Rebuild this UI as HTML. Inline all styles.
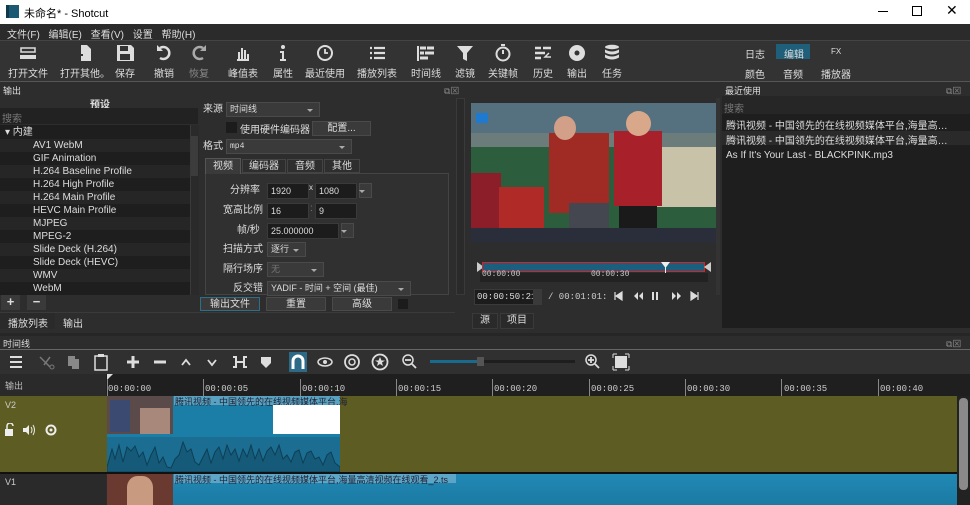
<!DOCTYPE html>
<html><head><meta charset="utf-8">
<style>
*{margin:0;padding:0;box-sizing:border-box}
body{width:970px;height:505px;overflow:hidden;background:#2d2d2d;font-family:"Liberation Sans","Noto Sans CJK SC",sans-serif;font-size:10px;color:#ddd;position:relative}
.a{position:absolute;white-space:nowrap}
.tb{position:absolute;top:44px;width:50px;text-align:center;font-size:10px;color:#ddd}
.tb svg{display:block;margin:0 auto 3px;height:18px}
.row{position:absolute;left:0;width:190px;height:13px;padding-left:33px;line-height:13px;font-size:10px;color:#ddd}
.inp{position:absolute;background:#1c1c1c;border:1px solid #3a3a3a;color:#ddd;font-size:9px;line-height:14px;padding-left:3px}
.cb{position:absolute;background:#3a3a3a;border:1px solid #4a4a4a;color:#ddd;font-size:9px;line-height:13px;padding-left:3px}
.cb:after{content:"";position:absolute;right:6px;top:6px;border:3px solid transparent;border-top:3px solid #aaa}
.lbl{position:absolute;font-size:10px;line-height:12px;color:#ddd;text-align:right}
.btn{position:absolute;background:#3a3a3a;border:1px solid #4a4a4a;text-align:center;font-size:10px;line-height:13px;color:#ddd}
.tick{position:absolute;top:379px;width:1px;height:17px;background:#888}
.rl{position:absolute;top:384px;font-family:"Liberation Mono",monospace;font-size:9px;color:#ccc}
.rec{position:absolute;left:726px;width:230px;overflow:hidden;text-overflow:ellipsis;white-space:nowrap}
</style></head><body>
<!-- title bar -->
<div class="a" style="left:0;top:0;width:970px;height:24px;background:#fff"></div>
<div class="a" style="left:6px;top:5px;width:13px;height:13px;background:#1c5a73;border-left:3px solid #12394a"></div>
<div class="a" style="left:24px;top:5px;color:#000;font-size:11px">未命名* - Shotcut</div>
<div class="a" style="left:878px;top:11px;width:10px;height:1px;background:#000"></div>
<div class="a" style="left:912px;top:6px;width:10px;height:10px;border:1px solid #000"></div>
<div class="a" style="left:946px;top:2px;color:#000;font-size:14px">✕</div>
<!-- menu -->
<div class="a" style="left:0;top:24px;width:970px;height:16px;background:#2b2b2b"></div>
<div class="a" style="left:7px;top:26px;font-size:10px;word-spacing:6px">文件(F) 编辑(E) 查看(V) 设置 帮助(H)</div>
<!-- toolbar -->
<div class="a" style="left:0;top:40px;width:970px;height:42px;background:#333;border-top:1px solid #444;border-bottom:1px solid #555"></div>
<div class="tb" style="left:3px"><svg viewBox="0 0 20 18" width="20"><rect x="3" y="4" width="14" height="4" fill="none" stroke="#ddd" stroke-width="1.5"/><rect x="2" y="11" width="16" height="4" fill="#ddd"/></svg>打开文件</div>
<div class="tb" style="left:60px"><svg viewBox="0 0 20 18" width="20"><path d="M6 1h6l4 4v12H6z" fill="#ddd"/><path d="M2 11h6M5 8v6" stroke="#333" stroke-width="2"/></svg>打开其他。</div>
<div class="tb" style="left:100px"><svg viewBox="0 0 20 18" width="20"><path d="M2 1h14l3 3v13H2z" fill="#ddd"/><rect x="5" y="2" width="8" height="5" fill="#333"/><rect x="5" y="10" width="10" height="6" fill="#333"/></svg>保存</div>
<div class="tb" style="left:139px"><svg viewBox="0 0 20 18" width="20"><path d="M6 4a6 6 0 1 1 0 10" fill="none" stroke="#ddd" stroke-width="2.5"/><path d="M3 1v6h6z" fill="#ddd"/></svg>撤销</div>
<div class="tb" style="left:174px;color:#888"><svg viewBox="0 0 20 18" width="20"><path d="M14 4a6 6 0 1 0 0 10" fill="none" stroke="#aaa" stroke-width="2.5"/><path d="M17 1v6h-6z" fill="#aaa"/></svg>恢复</div>
<div class="tb" style="left:218px"><svg viewBox="0 0 20 18" width="20"><path d="M4 16h12M6 8v7M9 4v11M12 6v9M15 10v5" stroke="#ddd" stroke-width="2"/></svg>峰值表</div>
<div class="tb" style="left:258px"><svg viewBox="0 0 20 18" width="20"><circle cx="10" cy="3" r="2" fill="#ddd"/><path d="M7 7h4v8h2v2H7v-2h2V9H7z" fill="#ddd"/></svg>属性</div>
<div class="tb" style="left:300px"><svg viewBox="0 0 20 18" width="20"><circle cx="10" cy="9" r="7" fill="none" stroke="#ddd" stroke-width="2"/><path d="M10 5v4h3" stroke="#ddd" stroke-width="1.8" fill="none"/></svg>最近使用</div>
<div class="tb" style="left:352px"><svg viewBox="0 0 20 18" width="20"><path d="M3 4h2M7 4h11M3 9h2M7 9h11M3 14h2M7 14h11" stroke="#ddd" stroke-width="2.2"/></svg>播放列表</div>
<div class="tb" style="left:401px"><svg viewBox="0 0 20 18" width="20"><path d="M2 2v15" stroke="#ddd" stroke-width="2"/><path d="M4 4h6M11 4h7M4 9h4M9 9h9M4 14h8" stroke="#ddd" stroke-width="3"/></svg>时间线</div>
<div class="tb" style="left:440px"><svg viewBox="0 0 20 18" width="20"><path d="M2 2h16l-6 7v8l-4-2V9z" fill="#ddd"/></svg>滤镜</div>
<div class="tb" style="left:478px"><svg viewBox="0 0 20 18" width="20"><circle cx="10" cy="10" r="6.5" fill="none" stroke="#ddd" stroke-width="2"/><path d="M8 1h4M10 6v4" stroke="#ddd" stroke-width="2"/></svg>关键帧</div>
<div class="tb" style="left:518px"><svg viewBox="0 0 20 18" width="20"><path d="M2 4h6M10 4h8M2 9h10M2 14h6" stroke="#ddd" stroke-width="2.5"/><path d="M16 9l-4 4h6" fill="none" stroke="#ddd" stroke-width="1.5"/></svg>历史</div>
<div class="tb" style="left:552px"><svg viewBox="0 0 20 18" width="20"><circle cx="10" cy="9" r="8" fill="#ddd"/><circle cx="10" cy="9" r="2.5" fill="#333"/></svg>输出</div>
<div class="tb" style="left:587px"><svg viewBox="0 0 20 18" width="20"><ellipse cx="10" cy="3" rx="7" ry="2.2" fill="#ddd"/><path d="M3 5.5q7 4 14 0v3q-7 4-14 0zM3 10.5q7 4 14 0v3q-7 4-14 0z" fill="#ddd"/></svg>任务</div>
<div class="a" style="left:745px;top:46px">日志</div>
<div class="a" style="left:776px;top:44px;width:34px;height:15px;background:#1f5f7a"></div>
<div class="a" style="left:784px;top:46px">编辑</div>
<div class="a" style="left:831px;top:47px;font-size:8px">FX</div>
<div class="a" style="left:745px;top:66px">颜色</div>
<div class="a" style="left:783px;top:66px">音频</div>
<div class="a" style="left:821px;top:66px">播放器</div>

<!-- Output panel -->
<div class="a" style="left:0;top:83px;width:720px;height:250px;background:#2d2d2d"></div>
<div class="a" style="left:3px;top:84px;font-size:9px">输出</div>
<div class="a" style="left:444px;top:84px;font-size:9px;color:#888">⧉⊠</div>
<div class="a" style="left:90px;top:96px;font-weight:bold;font-size:10px">预设</div>
<div class="a" style="left:0;top:108px;width:198px;height:16px;background:#222"></div>
<div class="a" style="left:2px;top:110px;color:#777;font-size:10px">搜索</div>
<div class="a" style="left:0;top:125px;width:190px;height:170px;background:#1e1e1e"></div>
<div class="row" style="top:126px;padding-left:5px">▾ 内建</div>
<div class="row" style="top:139px;background:#262626">AV1 WebM</div>
<div class="row" style="top:152px">GIF Animation</div>
<div class="row" style="top:165px;background:#262626">H.264 Baseline Profile</div>
<div class="row" style="top:178px">H.264 High Profile</div>
<div class="row" style="top:191px;background:#262626">H.264 Main Profile</div>
<div class="row" style="top:204px">HEVC Main Profile</div>
<div class="row" style="top:217px;background:#262626">MJPEG</div>
<div class="row" style="top:230px">MPEG-2</div>
<div class="row" style="top:243px;background:#262626">Slide Deck (H.264)</div>
<div class="row" style="top:256px">Slide Deck (HEVC)</div>
<div class="row" style="top:269px;background:#262626">WMV</div>
<div class="row" style="top:282px">WebM</div>
<div class="a" style="left:190px;top:125px;width:9px;height:170px;background:#2a2a2a;border-left:1px solid #3a3a3a"></div>
<div class="a" style="left:191px;top:136px;width:7px;height:40px;background:#3c3c3c"></div>
<div class="a" style="left:1px;top:295px;width:19px;height:15px;background:#3a3a3a;text-align:center;font-weight:bold;font-size:13px;line-height:14px">+</div>
<div class="a" style="left:27px;top:295px;width:19px;height:15px;background:#3a3a3a;text-align:center;font-weight:bold;font-size:13px;line-height:13px">−</div>
<div class="a" style="left:0;top:312px;width:455px;height:1px;background:#3a3a3a"></div>
<div class="a" style="left:0;top:313px;width:55px;height:16px;background:#2a2a2a"></div>
<div class="a" style="left:8px;top:315px">播放列表</div>
<div class="a" style="left:63px;top:315px">输出</div>

<!-- form -->
<div class="lbl" style="left:203px;top:104px">来源</div>
<div class="cb" style="left:226px;top:102px;width:94px;height:15px">时间线</div>
<div class="a" style="left:226px;top:122px;width:11px;height:11px;background:#1c1c1c"></div>
<div class="a" style="left:240px;top:121px">使用硬件编码器</div>
<div class="btn" style="left:312px;top:121px;width:59px;height:15px">配置...</div>
<div class="lbl" style="left:203px;top:141px">格式</div>
<div class="cb" style="left:226px;top:139px;width:126px;height:15px;font-family:'Liberation Mono',monospace;font-size:8px">mp4</div>
<div class="a" style="left:205px;top:173px;width:244px;height:122px;border:1px solid #444;background:#303030"></div>
<div class="a" style="left:205px;top:158px;width:36px;height:16px;background:#3a3a3a;border:1px solid #555;border-bottom:none;text-align:center;line-height:15px">视频</div>
<div class="a" style="left:242px;top:159px;width:44px;height:14px;background:#2e2e2e;border:1px solid #444;text-align:center;line-height:13px">编码器</div>
<div class="a" style="left:287px;top:159px;width:36px;height:14px;background:#2e2e2e;border:1px solid #444;text-align:center;line-height:13px">音频</div>
<div class="a" style="left:324px;top:159px;width:36px;height:14px;background:#2e2e2e;border:1px solid #444;text-align:center;line-height:13px">其他</div>
<div class="lbl" style="left:230px;top:185px">分辨率</div>
<div class="inp" style="left:267px;top:183px;width:42px;height:16px">1920</div>
<div class="a" style="left:309px;top:183px;font-size:8px">x</div>
<div class="inp" style="left:315px;top:183px;width:42px;height:16px">1080</div>
<div class="cb" style="left:359px;top:183px;width:13px;height:15px"></div>
<div class="lbl" style="left:223px;top:205px">宽高比例</div>
<div class="inp" style="left:267px;top:203px;width:42px;height:16px">16</div>
<div class="a" style="left:310px;top:203px;color:#777">:</div>
<div class="inp" style="left:315px;top:203px;width:42px;height:16px">9</div>
<div class="lbl" style="left:237px;top:225px">帧/秒</div>
<div class="inp" style="left:267px;top:223px;width:72px;height:16px">25.000000</div>
<div class="cb" style="left:341px;top:223px;width:13px;height:15px"></div>
<div class="lbl" style="left:223px;top:244px">扫描方式</div>
<div class="cb" style="left:267px;top:242px;width:39px;height:15px">逐行</div>
<div class="lbl" style="left:223px;top:264px">隔行场序</div>
<div class="cb" style="left:267px;top:262px;width:57px;height:15px;color:#777">无</div>
<div class="lbl" style="left:233px;top:283px">反交错</div>
<div class="cb" style="left:267px;top:281px;width:144px;height:15px;font-size:9px">YADIF - 时间 + 空间 (最佳)</div>
<div class="btn" style="left:200px;top:297px;width:60px;height:14px;border-color:#2d6e8a">输出文件</div>
<div class="btn" style="left:266px;top:297px;width:60px;height:14px">重置</div>
<div class="btn" style="left:332px;top:297px;width:60px;height:14px">高级</div>
<div class="a" style="left:398px;top:299px;width:10px;height:10px;background:#1c1c1c"></div>
<div class="a" style="left:456px;top:98px;width:9px;height:197px;background:#2a2a2a;border:1px solid #3a3a3a"></div>

<!-- preview -->
<div class="a" style="left:471px;top:103px;width:245px;height:139px;background:#55707e;overflow:hidden">
 <div class="a" style="left:0;top:30px;width:245px;height:30px;background:#6b7c7a"></div>
 <div class="a" style="left:0;top:44px;width:245px;height:95px;background:#2c5e3e"></div>
 <div class="a" style="left:160px;top:44px;width:85px;height:60px;background:#c8c2a8"></div>
 <div class="a" style="left:0;top:70px;width:30px;height:60px;background:#8c1e2a"></div>
 <div class="a" style="left:28px;top:84px;width:45px;height:55px;background:#b02a28"></div>
 <div class="a" style="left:78px;top:30px;width:60px;height:80px;background:#a02a24"></div>
 <div class="a" style="left:98px;top:100px;width:40px;height:39px;background:#444650"></div>
 <div class="a" style="left:143px;top:28px;width:48px;height:75px;background:#a8202a"></div>
 <div class="a" style="left:148px;top:103px;width:38px;height:36px;background:#1a1a1a"></div>
 <div class="a" style="left:155px;top:8px;width:25px;height:25px;border-radius:50%;background:#d9a88a"></div>
 <div class="a" style="left:83px;top:13px;width:22px;height:24px;border-radius:50%;background:#d2a088"></div>
 <div class="a" style="left:5px;top:10px;width:12px;height:10px;background:#1e7ad0"></div>
 <div class="a" style="left:0;top:125px;width:245px;height:14px;background:#2a2e3a"></div>
</div>
<div class="a" style="left:716px;top:98px;width:4px;height:197px;background:#333"></div>
<div class="a" style="left:477px;top:262px;width:7px;height:10px;background:#ccc;clip-path:polygon(0 0,100% 50%,0 100%)"></div>
<div class="a" style="left:482px;top:262px;width:223px;height:10px;background:#1a5f7e;border:1px solid #e02020"></div>
<div class="a" style="left:704px;top:262px;width:7px;height:10px;background:#ccc;clip-path:polygon(100% 0,0 50%,100% 100%)"></div>
<div class="a" style="left:661px;top:262px;width:9px;height:6px;background:#eee;clip-path:polygon(0 0,100% 0,50% 100%)"></div>
<div class="a" style="left:665px;top:266px;width:1px;height:15px;background:#eee"></div>
<div class="a" style="left:480px;top:273px;width:228px;height:9px;background:#222"></div>
<div class="a" style="left:482px;top:270px;font-family:'Liberation Mono',monospace;font-size:8px;color:#ccc">00:00:00</div>
<div class="a" style="left:591px;top:270px;font-family:'Liberation Mono',monospace;font-size:8px;color:#ccc">00:00:30</div>
<div class="inp" style="left:474px;top:289px;width:64px;height:16px;font-family:'Liberation Mono',monospace;font-size:9px;line-height:15px;padding-left:2px">00:00:50:21</div>
<div class="a" style="left:533px;top:289px;width:9px;height:16px;background:#3a3a3a"></div>
<div class="a" style="left:548px;top:292px;font-family:'Liberation Mono',monospace;font-size:9px;color:#ccc">/ 00:01:01:</div>
<svg class="a" style="left:612px;top:291px" width="90" height="10" viewBox="0 0 90 10">
 <path d="M3 1v8M10 1v8L4 5z" fill="#ddd" stroke="#ddd" stroke-width="1.2"/>
 <path d="M26 1v8l-4-4zM31 1v8l-4-4z" fill="#ddd"/>
 <path d="M40 1h2v8h-2zM44 1h2v8h-2z" fill="#ddd"/>
 <path d="M60 1v8l4-4zM65 1v8l4-4z" fill="#ddd"/>
 <path d="M79 1v8l6-4z M86 1v8" fill="#ddd" stroke="#ddd" stroke-width="1.2"/>
</svg>
<div class="a" style="left:472px;top:313px;width:26px;height:16px;background:#2a2a2a;border:1px solid #3a3a3a;text-align:center;line-height:14px">源</div>
<div class="a" style="left:500px;top:313px;width:34px;height:16px;background:#2a2a2a;border:1px solid #3a3a3a;text-align:center;line-height:14px">项目</div>

<!-- recent -->
<div class="a" style="left:722px;top:83px;width:248px;height:245px;background:#262626"></div>
<div class="a" style="left:722px;top:83px;width:248px;height:13px;background:#2d2d2d"></div>
<div class="a" style="left:725px;top:84px;font-size:9px">最近使用</div>
<div class="a" style="left:946px;top:84px;font-size:9px;color:#888">⧉⊠</div>
<div class="a" style="left:724px;top:100px;color:#777">搜索</div>
<div class="a" style="left:722px;top:114px;width:248px;height:214px;background:#1e1e1e"></div>
<div class="a" style="left:722px;top:131px;width:248px;height:14px;background:#2a2a2a"></div>
<div class="rec" style="top:117px">腾讯视频 - 中国领先的在线视频媒体平台,海量高清视频在线观看</div>
<div class="rec" style="top:132px">腾讯视频 - 中国领先的在线视频媒体平台,海量高清视频在线观看</div>
<div class="rec" style="top:150px">As If It's Your Last - BLACKPINK.mp3</div>

<!-- timeline -->
<div class="a" style="left:0;top:333px;width:970px;height:3px;background:#262626"></div>
<div class="a" style="left:3px;top:337px;font-size:9px">时间线</div>
<div class="a" style="left:946px;top:337px;font-size:9px;color:#888">⧉⊠</div>
<div class="a" style="left:0;top:349px;width:970px;height:1px;background:#666"></div>
<div class="a" style="left:0;top:350px;width:970px;height:24px;background:#303030"></div>
<svg class="a" style="left:0;top:350px" width="640" height="24" viewBox="0 0 640 24">
 <path d="M10 7h12M10 12h12M10 17h12" stroke="#ddd" stroke-width="2"/>
 <path d="M40 7l10 10M50 7l-6 8" stroke="#777" stroke-width="1.5" fill="none"/><circle cx="52" cy="17" r="2" fill="none" stroke="#777"/>
 <rect x="68" y="6" width="7" height="10" fill="#888"/><rect x="72" y="9" width="7" height="10" fill="#888"/>
 <rect x="95" y="6" width="12" height="14" fill="none" stroke="#ddd" stroke-width="1.5"/><rect x="98" y="4" width="6" height="3" fill="#ddd"/>
 <path d="M127 12h12M133 6v12" stroke="#ddd" stroke-width="3"/>
 <path d="M154 12h12" stroke="#ddd" stroke-width="3"/>
 <path d="M182 15l4-5 4 5" stroke="#ddd" stroke-width="1.8" fill="none"/>
 <path d="M208 10l4 5 4-5" stroke="#ddd" stroke-width="1.8" fill="none"/>
 <path d="M233 7h3v10h-3M247 7h-3v10h3M236 12h8" stroke="#ddd" stroke-width="2" fill="none"/>
 <path d="M261 7h10v6l-5 5-5-5z" fill="#ddd"/>
 <rect x="289" y="2" width="18" height="20" fill="#2d6a87"/>
 <path d="M293 19v-8a5 5 0 0 1 10 0v8" stroke="#fff" stroke-width="3" fill="none"/>
 <ellipse cx="325" cy="12" rx="7" ry="4" fill="none" stroke="#ddd" stroke-width="1.5"/><circle cx="325" cy="12" r="2" fill="#ddd"/>
 <circle cx="352" cy="12" r="7" fill="none" stroke="#ddd" stroke-width="1.8"/><circle cx="352" cy="12" r="3" fill="none" stroke="#ddd" stroke-width="1.5"/>
 <circle cx="380" cy="12" r="7.5" fill="none" stroke="#ddd" stroke-width="1.8"/><path d="M380 7l1.5 3.5h3.5l-3 2 1 3.5-3-2-3 2 1-3.5-3-2h3.5z" fill="#ddd"/>
 <circle cx="408" cy="10" r="5" fill="none" stroke="#ddd" stroke-width="1.5"/><path d="M405 10h6M412 14l4 4" stroke="#ddd" stroke-width="1.8"/>
 <rect x="430" y="10" width="145" height="3" fill="#1e1e1e"/><rect x="430" y="10" width="50" height="3" fill="#1a6a8e"/><rect x="477" y="7" width="7" height="9" fill="#555"/>
 <circle cx="591" cy="10" r="5" fill="none" stroke="#ddd" stroke-width="1.5"/><path d="M588 10h6M591 7v6M595 14l4 4" stroke="#ddd" stroke-width="1.8"/>
 <rect x="615" y="6" width="12" height="12" fill="#ddd"/><path d="M613 4h4M613 4v4M629 4h-4M629 4v4M613 20h4M613 20v-4M629 20h-4M629 20v-4" stroke="#ddd" stroke-width="1"/>
</svg>
<div class="a" style="left:0;top:374px;width:970px;height:22px;background:#1f1f1f"></div>
<div class="a" style="left:0;top:374px;width:106px;height:22px;background:#2a2a2a"></div>
<div class="a" style="left:5px;top:379px;font-size:9px;color:#bbb">输出</div>
<div class="a" style="left:107px;top:374px;width:6px;height:6px;background:#ddd;clip-path:polygon(0 0,100% 0,0 100%)"></div>
<div class="tick" style="left:107px"></div><div class="rl" style="left:108px">00:00:00</div>
<div class="tick" style="left:203px"></div><div class="rl" style="left:205px">00:00:05</div>
<div class="tick" style="left:300px"></div><div class="rl" style="left:302px">00:00:10</div>
<div class="tick" style="left:396px"></div><div class="rl" style="left:398px">00:00:15</div>
<div class="tick" style="left:492px"></div><div class="rl" style="left:494px">00:00:20</div>
<div class="tick" style="left:589px"></div><div class="rl" style="left:591px">00:00:25</div>
<div class="tick" style="left:685px"></div><div class="rl" style="left:687px">00:00:30</div>
<div class="tick" style="left:781px"></div><div class="rl" style="left:784px">00:00:35</div>
<div class="tick" style="left:878px"></div><div class="rl" style="left:880px">00:00:40</div>
<!-- V2 -->
<div class="a" style="left:0;top:396px;width:957px;height:76px;background:#5d5d23"></div>
<div class="a" style="left:5px;top:400px;font-size:9px;color:#ccc">V2</div>
<svg class="a" style="left:3px;top:423px" width="60" height="14" viewBox="0 0 60 14">
 <rect x="2" y="6" width="8" height="7" fill="#eee"/><path d="M4 6V3a3 3 0 0 1 6 0" stroke="#eee" stroke-width="1.5" fill="none"/>
 <path d="M20 5h3l3-3v10l-3-3h-3z" fill="#eee"/><path d="M28 4q2 3 0 6M30 2q3 5 0 10" stroke="#eee" stroke-width="1" fill="none"/>
 <circle cx="48" cy="7" r="4.5" fill="none" stroke="#eee" stroke-width="2"/><circle cx="48" cy="7" r="1.5" fill="#eee"/>
</svg>
<div class="a" style="left:107px;top:396px;width:233px;height:76px;background:#1a7ea6"></div>
<div class="a" style="left:107px;top:396px;width:66px;height:38px;background:#5a4a4a"></div>
<div class="a" style="left:110px;top:400px;width:20px;height:32px;background:#3a4a70"></div>
<div class="a" style="left:140px;top:408px;width:30px;height:26px;background:#a8887a"></div>
<div class="a" style="left:174px;top:396px;width:166px;height:9px;background:#8fc0d8;opacity:.55"></div>
<div class="a" style="left:175px;top:395px;font-size:9px;color:#223">腾讯视频 - 中国领先的在线视频媒体平台,海</div>
<div class="a" style="left:273px;top:405px;width:67px;height:29px;background:#fff"></div>
<div class="a" style="left:107px;top:437px;width:233px;height:35px;background:#1b6e91"></div>
<svg class="a" style="left:107px;top:437px" width="233" height="35"><path d="M0 30 L5 12 8 22 12 8 16 25 20 10 24 14 28 9 32 20 36 15 40 28 44 18 48 10 52 26 56 20 60 30 64 31 68 22 72 18 76 5 80 15 84 12 88 25 92 28 96 20 100 12 104 26 108 15 112 10 116 22 120 8 124 18 128 12 132 24 136 12 140 20 144 8 148 22 152 12 156 24 160 14 164 10 168 18 172 8 176 22 180 18 184 25 188 15 192 13 196 26 200 16 204 14 208 22 212 20 216 28 220 18 224 15 228 26 233 30 V35 H0Z" fill="#155a78" stroke="#0e3e55" stroke-width="1"/></svg>
<!-- V1 -->
<div class="a" style="left:0;top:472px;width:957px;height:2px;background:#111"></div>
<div class="a" style="left:0;top:474px;width:106px;height:31px;background:#2a2a2a"></div>
<div class="a" style="left:5px;top:477px;font-size:9px;color:#ccc">V1</div>
<div class="a" style="left:107px;top:474px;width:850px;height:31px;background:linear-gradient(#2189b5,#1b7aa2)"></div>
<div class="a" style="left:107px;top:474px;width:66px;height:31px;background:#6a3a30"></div>
<div class="a" style="left:127px;top:476px;width:26px;height:29px;background:#c89a80;border-radius:40% 40% 0 0"></div>
<div class="a" style="left:174px;top:474px;width:282px;height:9px;background:#8fc0d8;opacity:.55"></div>
<div class="a" style="left:175px;top:473px;font-size:9px;color:#223">腾讯视频 - 中国领先的在线视频媒体平台,海量高清视频在线观看_2.ts</div>
<!-- scrollbar -->
<div class="a" style="left:957px;top:396px;width:13px;height:109px;background:#222"></div>
<div class="a" style="left:959px;top:398px;width:9px;height:92px;background:#8a8a8a;border-radius:4px"></div>
</body></html>
